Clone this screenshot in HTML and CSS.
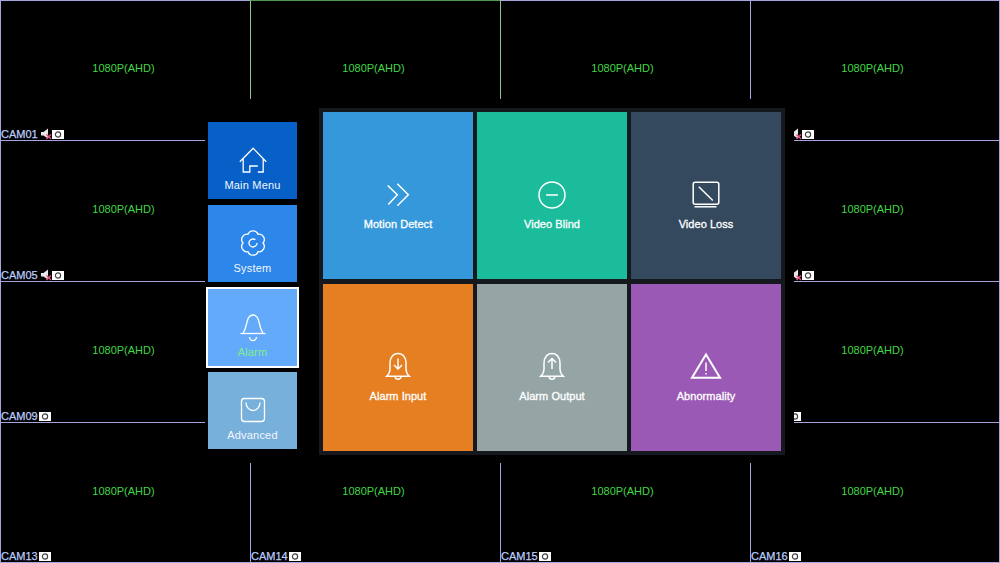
FILE: index.html
```html
<!DOCTYPE html>
<html lang="en">
<head>
    <meta charset="UTF-8">
    <meta name="viewport" content="width=device-width, initial-scale=1.0">
    <title>Alarm Menu</title>
    <link rel="stylesheet" href="styles.css">
</head>
<body>
    <svg class="defs" width="0" height="0">
        <symbol id="snap" viewBox="0 0 12 9">
            <rect width="12" height="9" fill="#fff"/>
            <circle cx="6" cy="4.5" r="2.6" fill="none" stroke="#444" stroke-width="1.2"/>
        </symbol>
        <symbol id="mute" viewBox="0 0 12 12">
            <path d="M1 4H3.5L8 0.5V10.5L3.5 7.5H1Z" fill="#e8e8e8"/>
            <path d="M6.5 6.5L11 11M11 6.5L6.5 11" stroke="#e8507c" stroke-width="1.4"/>
        </symbol>
    </svg>

    <div class="wall">
        <div class="cell">
            <div class="res">1080P(AHD)</div>
            <div class="cam"><span>CAM01</span><svg class="mute"><use href="#mute"/></svg><svg class="snap"><use href="#snap"/></svg></div>
        </div>
        <div class="cell selected">
            <div class="res">1080P(AHD)</div>
            <div class="cam"></div>
        </div>
        <div class="cell after-selected">
            <div class="res">1080P(AHD)</div>
            <div class="cam"></div>
        </div>
        <div class="cell">
            <div class="res">1080P(AHD)</div>
            <div class="cam"><span></span><svg class="mute"><use href="#mute"/></svg><svg class="snap"><use href="#snap"/></svg></div>
        </div>

        <div class="cell">
            <div class="res">1080P(AHD)</div>
            <div class="cam"><span>CAM05</span><svg class="mute"><use href="#mute"/></svg><svg class="snap"><use href="#snap"/></svg></div>
        </div>
        <div class="cell"></div>
        <div class="cell"></div>
        <div class="cell">
            <div class="res">1080P(AHD)</div>
            <div class="cam"><span></span><svg class="mute"><use href="#mute"/></svg><svg class="snap"><use href="#snap"/></svg></div>
        </div>

        <div class="cell">
            <div class="res">1080P(AHD)</div>
            <div class="cam"><span>CAM09</span><svg class="snap"><use href="#snap"/></svg></div>
        </div>
        <div class="cell"></div>
        <div class="cell"></div>
        <div class="cell">
            <div class="res">1080P(AHD)</div>
            <div class="cam"><span></span><svg class="snap"><use href="#snap"/></svg></div>
        </div>

        <div class="cell">
            <div class="res">1080P(AHD)</div>
            <div class="cam"><span>CAM13</span><svg class="snap"><use href="#snap"/></svg></div>
        </div>
        <div class="cell">
            <div class="res">1080P(AHD)</div>
            <div class="cam"><span>CAM14</span><svg class="snap"><use href="#snap"/></svg></div>
        </div>
        <div class="cell">
            <div class="res">1080P(AHD)</div>
            <div class="cam"><span>CAM15</span><svg class="snap"><use href="#snap"/></svg></div>
        </div>
        <div class="cell">
            <div class="res">1080P(AHD)</div>
            <div class="cam"><span>CAM16</span><svg class="snap"><use href="#snap"/></svg></div>
        </div>
    </div>

    <div class="menu">
        <div class="side">
            <div class="side-item main">
                <svg class="side-icon" viewBox="0 0 30 30">
                    <path d="M1.8 16.7L15.2 3.3L28.2 16.7M5.2 14V27H11.8V21H19.8M19.8 27H25.2V14"/>
                </svg>
                <div class="side-label">Main Menu</div>
            </div>
            <div class="side-item system">
                <svg class="side-icon" viewBox="0 0 30 30">
                    <path d="M10 6.34A5.3 5.3 0 0 1 20 6.34A5.3 5.3 0 0 1 25 15A5.3 5.3 0 0 1 20 23.66A5.3 5.3 0 0 1 10 23.66A5.3 5.3 0 0 1 5 15A5.3 5.3 0 0 1 10 6.34Z"/>
                    <path d="M19 15a4 4 0 1 1 -1.6 -3.2"/>
                </svg>
                <div class="side-label">System</div>
            </div>
            <div class="side-item alarm active">
                <svg class="side-icon" viewBox="0 0 30 30">
                    <path d="M5 21C7 19 8 14 9 10C10 5 12.5 3 15 3C17.5 3 20 5 21 10C22 14 23 19 25 21"/>
                    <path d="M2.5 21.5H27.5"/>
                    <path d="M11.5 25a3.5 3.5 0 0 0 7 0"/>
                </svg>
                <div class="side-label">Alarm</div>
            </div>
            <div class="side-item advanced">
                <svg class="side-icon" viewBox="0 0 30 30">
                    <rect x="3.5" y="3.5" width="23" height="23" rx="3"/>
                    <path d="M8 7.5a7 8 0 0 0 14 0"/>
                </svg>
                <div class="side-label">Advanced</div>
            </div>
        </div>

        <div class="panel">
            <div class="tile motion">
                <svg class="tile-icon" viewBox="0 0 32 32">
                    <path d="M5.7 6.5L15.3 15.8L6.3 25.5"/>
                    <path d="M15.3 4.8L26.3 15.8L15.3 26.8"/>
                </svg>
                <div class="tile-label">Motion Detect</div>
            </div>
            <div class="tile blind">
                <svg class="tile-icon" viewBox="0 0 32 32">
                    <circle cx="16" cy="16" r="13"/>
                    <path d="M10 16H22"/>
                </svg>
                <div class="tile-label">Video Blind</div>
            </div>
            <div class="tile loss">
                <svg class="tile-icon" viewBox="0 0 32 32">
                    <rect x="3.2" y="3.2" width="25.6" height="22" rx="2"/>
                    <path d="M8.8 7.8L22.8 21.5"/>
                    <path d="M4.5 27.8H26.5"/>
                </svg>
                <div class="tile-label">Video Loss</div>
            </div>
            <div class="tile input">
                <svg class="tile-icon" viewBox="0 0 32 32">
                    <path d="M16 2.5C11 2.5 8 6.5 8 12V18C8 21 6 24 4.7 25.2H27.3C26 24 24 21 24 18V12C24 6.5 21 2.5 16 2.5Z"/>
                    <path d="M13 25.2a3 3 0 0 0 6 0"/>
                    <path d="M16 7.5V18M12 14L16 18L20 14"/>
                </svg>
                <div class="tile-label">Alarm Input</div>
            </div>
            <div class="tile output">
                <svg class="tile-icon" viewBox="0 0 32 32">
                    <path d="M16 2.5C11 2.5 8 6.5 8 12V18C8 21 6 24 4.7 25.2H27.3C26 24 24 21 24 18V12C24 6.5 21 2.5 16 2.5Z"/>
                    <path d="M13 25.2a3 3 0 0 0 6 0"/>
                    <path d="M16 18V7.5M12 11.5L16 7.5L20 11.5"/>
                </svg>
                <div class="tile-label">Alarm Output</div>
            </div>
            <div class="tile abnormal">
                <svg class="tile-icon" viewBox="0 0 32 32">
                    <path class="thick" d="M16 3.5L30 26.8H2Z"/>
                    <path d="M16 11.5V20M16 22V23.5"/>
                </svg>
                <div class="tile-label">Abnormality</div>
            </div>
        </div>
    </div>
</body>
</html>
```

FILE: styles.css
```css
* {
    margin: 0;
    padding: 0;
    box-sizing: border-box;
}

body {
    width: 1000px;
    height: 563px;
    overflow: hidden;
    position: relative;
    background-color: #000;
    font-family: "Liberation Sans", Arial, sans-serif;
}

.defs {
    display: block;
}

/* camera wall */
.wall {
    display: grid;
    grid-template-columns: repeat(4, 250px);
    grid-template-rows: 140px repeat(3, 141px);
    width: 1000px;
    height: 563px;
    box-shadow: inset -1px -1px 0 #a6a6dc;
}

.cell {
    display: flex;
    flex-direction: column;
    min-width: 0;
    border-top: 1px solid #a6a6dc;
    border-left: 1px solid #a6a6dc;
}

.cell.selected {
    border-top-color: #4f9a4f;
    border-left-color: #8fc48f;
}

.cell.after-selected {
    border-left-color: #8fc48f;
}

.cell:nth-child(n+13) .cam {
    margin-bottom: 1px;
}

.res {
    flex: 1;
    display: flex;
    align-items: center;
    justify-content: center;
    padding-top: 8px;
    padding-right: 4px;
    font-size: 11px;
    color: #42d646;
}

.cell:nth-child(-n+4) .res {
    padding-top: 6px;
}

.cell:nth-child(4n+3) .res,
.cell:nth-child(4n) .res {
    padding-right: 6px;
}

.cam {
    display: flex;
    align-items: center;
    height: 12px;
    font-size: 11px;
    color: #bccdfb;
    -webkit-text-stroke: 0.25px #bccdfb;
    white-space: nowrap;
}

.cam span {
    width: 38px;
}

.cam .mute {
    width: 12px;
    height: 12px;
    margin-left: 1px;
}

.cam .snap {
    width: 12px;
    height: 9px;
}

/* menu dialog */
.menu {
    position: absolute;
    left: 205px;
    top: 99px;
    width: 589px;
    height: 364px;
    display: flex;
    align-items: flex-start;
    background-color: #000;
}

.side {
    display: flex;
    flex-direction: column;
    gap: 6.4px;
    width: 89px;
    margin: 23px 0 0 3px;
}

.side-item {
    display: flex;
    flex-direction: column;
    align-items: center;
    height: 77px;
    padding-top: 23px;
}

.main {
    background-color: #0660c8;
}

.system {
    background-color: #2d86ea;
}

.alarm {
    background-color: #64aafa;
}

.advanced {
    background-color: #78b0dc;
}

.active {
    outline: 2px solid #fff;
}

.side-icon,
.tile-icon {
    display: block;
    fill: none;
    stroke: #fff;
    stroke-width: 1.3;
}

.side-icon {
    width: 30px;
    height: 30px;
}

.side-label {
    margin-top: 3px;
    line-height: 14px;
    font-size: 11px;
    letter-spacing: 0.2px;
    color: #f2f6fc;
}

.active .side-label {
    color: #7ef08a;
}

.panel {
    display: grid;
    grid-template-columns: repeat(3, 150px);
    grid-template-rows: repeat(2, 167px);
    column-gap: 4px;
    row-gap: 5px;
    width: 466px;
    height: 347px;
    margin: 9px 0 0 22px;
    padding: 4px;
    background-color: #15191d;
}

.tile {
    display: flex;
    flex-direction: column;
    align-items: center;
    padding-top: 67px;
}

.motion {
    background-color: #3498db;
}

.blind {
    background-color: #1abc9c;
}

.loss {
    background-color: #34495e;
}

.input {
    background-color: #e67e22;
}

.output {
    background-color: #95a5a6;
}

.abnormal {
    background-color: #9b59b6;
}

.tile-icon {
    width: 32px;
    height: 32px;
    stroke-width: 1.5;
}

.tile-icon .thick {
    stroke-width: 2;
}

.tile-label {
    margin-top: 6px;
    line-height: 14px;
    font-size: 11px;
    letter-spacing: 0.05px;
    color: #fff;
    -webkit-text-stroke: 0.3px #fff;
}
```
